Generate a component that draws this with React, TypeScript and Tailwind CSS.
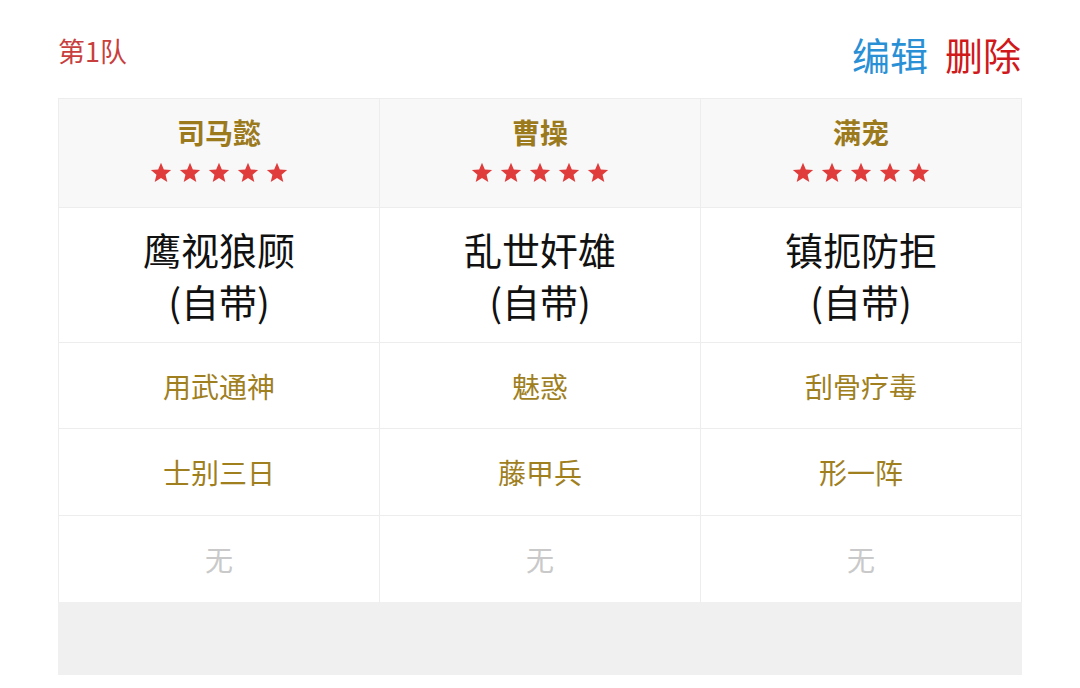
import React from "react";

const generals = [
  { name: "司马懿", skill: "鹰视狼顾", s1: "用武通神", s2: "士别三日" },
  { name: "曹操", skill: "乱世奸雄", s1: "魅惑", s2: "藤甲兵" },
  { name: "满宠", skill: "镇扼防拒", s1: "刮骨疗毒", s2: "形一阵" },
];

function Stars() {
  return (
    <div className="flex items-center justify-center gap-[7px]">
      {[0, 1, 2, 3, 4].map((i) => (
        <svg key={i} width="22" height="21" viewBox="0 0 24 23">
          <path
            d="M12 0.8l3.1 7.4 8 .6-6.1 5.2 1.9 7.8L12 17.6l-6.9 4.2 1.9-7.8L.9 8.8l8-.6z"
            fill="#e03c3c"
          />
        </svg>
      ))}
    </div>
  );
}

export default function App() {
  return (
    <div
      className="w-[1080px] h-[688px] bg-white overflow-hidden"
      style={{ fontFamily: '"Noto Sans CJK SC", "Noto Sans", sans-serif' }}
    >
      <div className="flex items-center justify-between pl-[58px] pr-[58px] h-[98px] pt-[4px]">
        <div className="text-[27px] text-[#c8403d]">第1队</div>
        <div className="flex items-center gap-[17px] text-[38px] leading-none mt-[6px] pr-[1px]">
          <span className="text-[#2a90d6]">编辑</span>
          <span className="text-[#d0191b]">删除</span>
        </div>
      </div>

      <div className="mx-[58px] bg-[#f0f0f0] pb-[73px]">
        <div className="grid grid-cols-3 border-t border-l border-[#ededed]">
          {generals.map((g) => (
            <div
              key={g.name + "h"}
              className="h-[109px] bg-[#f8f8f8] border-r border-b border-[#ededed] flex flex-col items-center justify-center"
            >
              <div className="text-[28px] font-bold text-[#9b7a1d] leading-none -mt-[5px]">
                {g.name}
              </div>
              <div className="mt-[16px]">
                <Stars />
              </div>
            </div>
          ))}
          {generals.map((g) => (
            <div
              key={g.name + "s"}
              className="h-[135px] bg-white border-r border-b border-[#ededed] flex flex-col items-center justify-center text-[38px] leading-[52px] text-[#111]"
            >
              <div>{g.skill}</div>
              <div>(自带)</div>
            </div>
          ))}
          {generals.map((g) => (
            <div
              key={g.name + "1"}
              className="h-[86px] bg-white border-r border-b border-[#ededed] flex items-center justify-center text-[28px] text-[#a07f1f]"
            >
              {g.s1}
            </div>
          ))}
          {generals.map((g) => (
            <div
              key={g.name + "2"}
              className="h-[87px] bg-white border-r border-b border-[#ededed] flex items-center justify-center text-[28px] text-[#a07f1f]"
            >
              {g.s2}
            </div>
          ))}
          {generals.map((g) => (
            <div
              key={g.name + "3"}
              className="h-[86px] bg-white border-r border-[#ededed] flex items-center justify-center text-[28px] text-[#c9c9c9]"
            >
              无
            </div>
          ))}
        </div>
      </div>
    </div>
  );
}
